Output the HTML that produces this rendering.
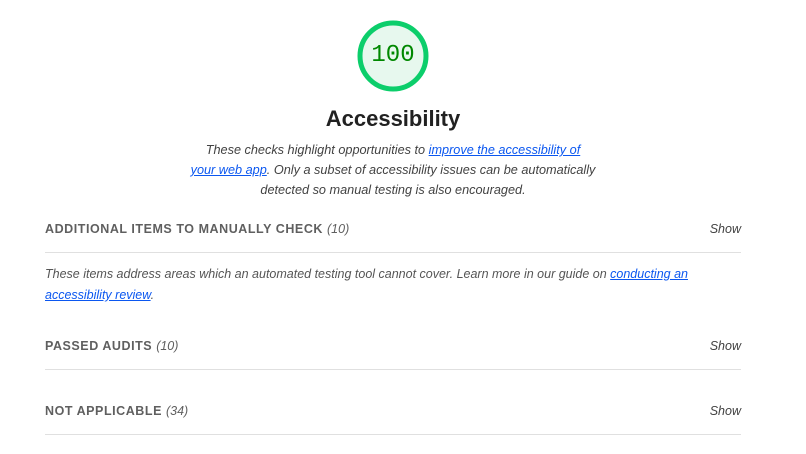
<!DOCTYPE html>
<html><head><meta charset="utf-8"><style>
body{margin:0;background:#fff;font-family:"Liberation Sans",Arial,sans-serif;width:806px;height:454px;overflow:hidden;position:relative}
.g{position:absolute;left:357px;top:20px;width:72px;height:72px}
.num{position:absolute;left:357px;top:20px;width:72px;height:72px;line-height:72px;text-align:center;font-family:"Liberation Mono",monospace;font-size:24px;color:#008800}
h1{position:absolute;top:106px;left:0;width:786px;text-align:center;margin:0;font-size:22px;font-weight:bold;color:#212121}
.desc{position:absolute;top:140px;left:143px;width:500px;text-align:center;white-space:nowrap;font-style:italic;font-size:12.7px;line-height:20px;color:#424242}
a{color:#0b57f0;text-decoration:underline}
.h{position:absolute;left:45px;width:696px;font-size:12.5px;font-weight:bold;letter-spacing:0.55px;color:#5f5f5f;text-transform:uppercase}
.h i{font-weight:normal;letter-spacing:0}
.h .s{position:absolute;right:0;top:0;font-style:italic;font-weight:normal;letter-spacing:0;text-transform:none;color:#424242}
.ln{position:absolute;left:45px;width:696px;height:1px;background:#e0e0e0}
.p{position:absolute;left:45px;top:264px;width:700px;font-style:italic;font-size:12.5px;line-height:21px;color:#555}
</style></head><body>
<svg class="g" viewBox="0 0 72 72"><circle cx="36" cy="36" r="33" fill="#e7f8ee" stroke="#0cce6b" stroke-width="5"/></svg>
<div class="num">100</div>
<h1>Accessibility</h1>
<div class="desc">These checks highlight opportunities to <a>improve the accessibility of</a><br><a>your web app</a>. Only a subset of accessibility issues can be automatically<br>detected so manual testing is also encouraged.</div>
<div class="h" style="top:222px">Additional items to manually check <i>(10)</i><span class="s">Show</span></div>
<div class="ln" style="top:252px"></div>
<div class="p">These items address areas which an automated testing tool cannot cover. Learn more in our guide on <a>conducting an accessibility review</a>.</div>
<div class="h" style="top:339px">Passed audits <i>(10)</i><span class="s">Show</span></div>
<div class="ln" style="top:369px"></div>
<div class="h" style="top:404px">Not applicable <i>(34)</i><span class="s">Show</span></div>
<div class="ln" style="top:434px"></div>
</body></html>
